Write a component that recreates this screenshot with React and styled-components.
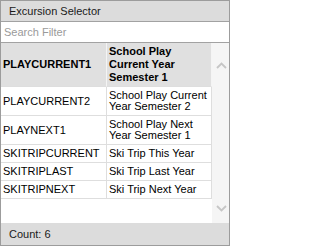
import React from 'react'
import styled, { createGlobalStyle, css } from 'styled-components'

const excursions = [
  { code: 'PLAYCURRENT1', name: 'School Play Current Year Semester 1' },
  { code: 'PLAYCURRENT2', name: 'School Play Current Year Semester 2' },
  { code: 'PLAYNEXT1', name: 'School Play Next Year Semester 1' },
  { code: 'SKITRIPCURRENT', name: 'Ski Trip This Year' },
  { code: 'SKITRIPLAST', name: 'Ski Trip Last Year' },
  { code: 'SKITRIPNEXT', name: 'Ski Trip Next Year' },
]

const GlobalStyle = createGlobalStyle`
  body {
    margin: 0;
    font-family: 'Liberation Sans', Arial, sans-serif;
  }
  * { box-sizing: border-box; }
`

const Chevron = ({ down }) => (
  <svg width="11" height="7" viewBox="0 0 11 7">
    <polyline
      points={down ? '1,1 5.5,5.5 10,1' : '1,6 5.5,1.5 10,6'}
      fill="none"
      stroke="#c6c6c6"
      strokeWidth="1.8"
    />
  </svg>
)

const App = () => {
  return (
    <>
      <GlobalStyle />
      <Panel>
        <TitleBar>Excursion Selector</TitleBar>
        <SearchBox placeholder="Search Filter" />
        <Body>
          <TableArea>
            {excursions.map((item, i) => (
              <Row key={item.code}>
                <Cell $selected={i === 0}>{item.code}</Cell>
                <Cell $selected={i === 0}>{item.name}</Cell>
              </Row>
            ))}
          </TableArea>
          <ScrollTrack>
            <Chevron />
            <Chevron down />
          </ScrollTrack>
        </Body>
        <Footer>Count: {excursions.length}</Footer>
      </Panel>
    </>
  )
}

const barText = css`
  font-size: 11px;
  color: #1a1a1a;
  padding-left: 8px;
  display: flex;
  align-items: center;
`

const Panel = styled.div`
  width: 230px;
  height: 246px;
  border: 1px solid #9c9c9c;
  display: flex;
  flex-direction: column;
  background: #ffffff;
  font-family: 'Liberation Sans', Arial, sans-serif;
`

const TitleBar = styled.div`
  ${barText}
  height: 21px;
  flex-shrink: 0;
  background: #dcdcdc;
  border-bottom: 1px solid #a2a2a2;
`

const SearchBox = styled.input`
  display: block;
  width: 100%;
  height: 21px;
  flex-shrink: 0;
  margin: 0;
  padding: 0 3px;
  border: none;
  border-bottom: 1px solid #a2a2a2;
  outline: none;
  font-family: inherit;
  font-size: 11px;
  color: #000;
  background: #fff;
  &::placeholder {
    color: #9a9a9a;
  }
`

const Body = styled.div`
  flex: 1;
  display: flex;
  min-height: 0;
`

const TableArea = styled.div`
  width: 211px;
  overflow: hidden;
  background: #fff;
`

const Row = styled.div`
  display: grid;
  grid-template-columns: 106px 105px;
`

const Cell = styled.div`
  display: flex;
  align-items: center;
  font-size: 11px;
  color: #000;
  border-right: 1px solid ${p => (p.$selected ? '#f4f4f4' : '#dedede')};
  border-bottom: 1px solid #dedede;
  ${p =>
    p.$selected
      ? css`
          background: #e0e0e0;
          font-weight: bold;
          line-height: 13px;
          padding: 2px 2px;
        `
      : css`
          background: #fff;
          line-height: 11px;
          padding: 3px 2px;
        `}
`

const ScrollTrack = styled.div`
  width: 17px;
  background: #f5f5f5;
  display: flex;
  flex-direction: column;
  align-items: center;
  justify-content: space-between;
  padding: 19px 0 11px 1px;
`

const Footer = styled.div`
  ${barText}
  height: 22px;
  flex-shrink: 0;
  background: #dcdcdc;
`

export default App
